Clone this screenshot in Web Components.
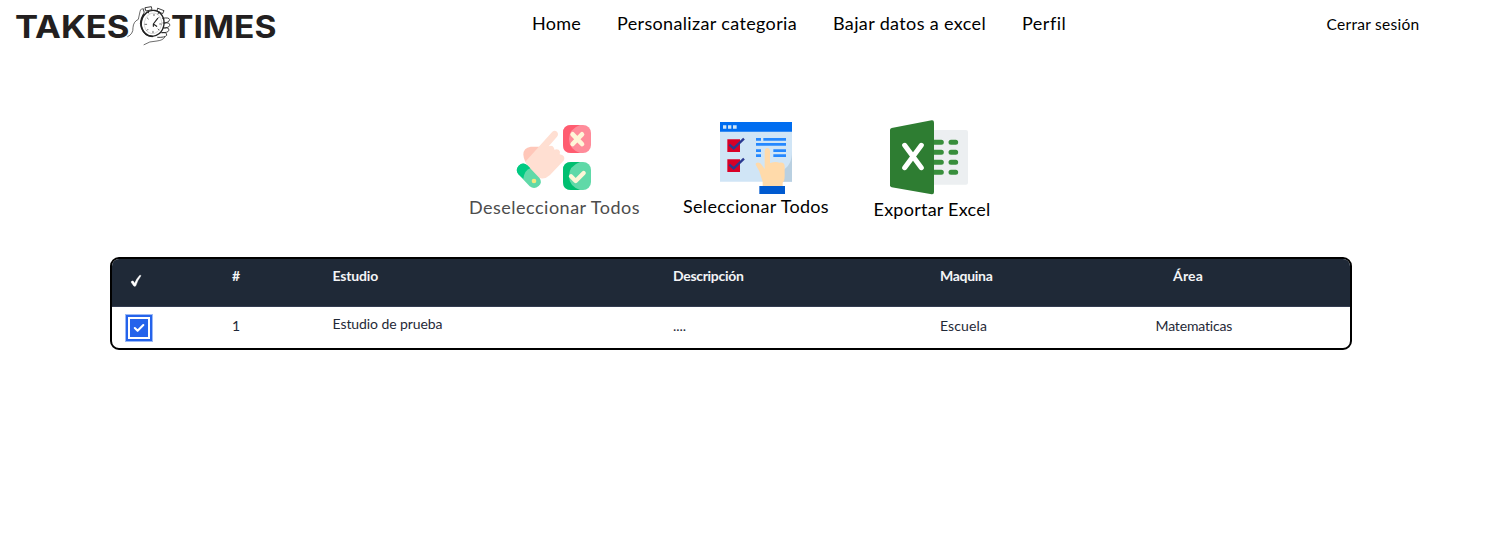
<!DOCTYPE html>
<html lang="es">
<head>
<meta charset="utf-8">
<title>Takes Times</title>
<style>
body{margin:0;background:#fff;font-family:Lato,"Open Sans",sans-serif;color:#000;height:552px;overflow:hidden}
</style>
</head>
<body>
<takes-app></takes-app>
<script>
const define=(name,html,after)=>customElements.define(name,class extends HTMLElement{
  connectedCallback(){
    if(this.shadowRoot)return;
    const t=document.createElement('template');
    t.innerHTML=html;
    this.attachShadow({mode:'open'}).append(t.content.cloneNode(true));
    if(after)after(this,this.shadowRoot);
  }
});

/* A single-line label whose tracking is adjusted to fill its declared width. */
define('fit-label',`<style>:host{display:block;white-space:nowrap;line-height:20px;height:20px}span{display:inline-block}</style><span><slot></slot></span>`,(el,root)=>{
  const w=+el.getAttribute('w'),s=root.querySelector('span'),n=el.textContent.length;
  el.style.width=w+'px';
  el.style.fontSize=el.getAttribute('size')+'px';
  s.style.letterSpacing=((w-s.getBoundingClientRect().width)/n)+'px';
});

define('takes-logo',`<style>:host{display:block;width:290px;height:50px}svg{display:block}text{font-family:Inter,sans-serif;font-weight:700;font-size:31px;fill:#231f20}</style>
<svg width="290" height="50" viewBox="0 0 290 50">
<text x="15" y="37.7" textLength="114.5" lengthAdjust="spacingAndGlyphs">TAKES</text>
<text x="171" y="37.7" textLength="105.5" lengthAdjust="spacingAndGlyphs">TIMES</text>
<g transform="translate(125) scale(.33333)" fill="none" stroke="#222" stroke-width="2.6" stroke-linecap="round" stroke-linejoin="round">
<ellipse cx="83" cy="70" rx="34" ry="39" stroke-width="4" transform="rotate(10 83 70)"/>
<path d="M55 45Q43 65 50 84Q59 108 82 109" stroke-width="5"/>
<ellipse cx="84" cy="70" rx="26" ry="31" stroke-width="1" transform="rotate(10 84 70)" opacity=".5"/>
<path d="M98 55L85 72V79M85 72l10 7" stroke-width="3.4"/>
<path d="M87 43v4M67 54l3 3M60 73h5M66 91l3-3M84 98v-4M102 90l-3-3M108 72h-4M102 52l-2 2" stroke-width="2"/>
<path d="M61 23l18-3 2 9-17 4zM99 25l18 7-4 9-16-7zM69 33l2 6M102 36l-3 6"/>
<path d="M57 27Q47 23 45 35L40 58Q25 65 24 83Q25 102 8 110" stroke-width="2"/>
<path d="M55 28Q61 36 54 47L46 69"/>
<path d="M113 55Q132 51 134 59Q134 67 119 69L114 69M119 69Q136 66 134 77Q131 84 114 84M119 84Q134 81 131 92Q128 99 110 98M111 98Q126 95 125 106Q120 113 98 112"/>
<path d="M57 134Q73 123 96 123Q114 121 119 112" stroke-width="2"/>
</g></svg>`);

define('top-bar',`<style>
:host{display:grid;grid-template-columns:532px 794.5px auto;height:50px}
nav{display:flex;gap:36px;padding-top:13px}
.out{padding-top:14px}
</style>
<takes-logo></takes-logo>
<nav><fit-label w="49" size="18">Home</fit-label><fit-label w="180" size="18">Personalizar categoria</fit-label><fit-label w="153" size="18">Bajar datos a excel</fit-label><fit-label w="44" size="18">Perfil</fit-label></nav>
<div class="out"><fit-label w="93" size="15.5">Cerrar sesión</fit-label></div>`);

define('icon-deselect',`<style>:host,svg{display:block}</style>
<svg width="100" height="85" viewBox="0 0 300 255">
<rect x="174" y="30" width="84" height="84" rx="24" fill="#ff8c9a"/>
<path d="M198 30h27Q192 42 192 72t33 42h-27q-24 0-24-24V54q0-24 24-24z" fill="#ff5c70"/>
<path d="M203 58l28 29M231 58l-28 29" stroke="#fff6d8" stroke-width="14" stroke-linecap="round"/>
<rect x="174" y="141" width="84" height="84" rx="24" fill="#60d9a8"/>
<path d="M198 141h27q-33 12-33 42t33 42h-27q-24 0-24-24v-36q0-24 24-24z" fill="#00bf70"/>
<path d="M198 184l14 14 24-24" fill="none" stroke="#fff6d8" stroke-width="13" stroke-linecap="round" stroke-linejoin="round"/>
<path d="M105 95H77Q55 98 55 119q2 20 14 31z" fill="#ffc7b9"/>
<path d="M61 140L142 50q7-6 14 0 6 7 0 15l-25 29q11-6 16 5l1 5q13-4 17 6l-1 8q18 3 13 18l-42 44q-20 19-43 4z" fill="#ffdfd2"/>
<path d="M41 152q13-13 26-1l37 39q9 13-3 23-13 12-27 1L40 178q-10-13 1-26z" fill="#60d9a8"/>
<path d="M41 152q13-13 26-1l9 9q-17 5-21 31l-15-13q-10-13 1-26z" fill="#00ca82"/>
<circle cx="87" cy="198" r="7" fill="#f5e77e"/>
</svg>`);

define('icon-select',`<style>:host,svg{display:block}</style>
<svg width="90" height="85" viewBox="0 0 270 255">
<path d="M30 21h216v179H30z" fill="#d0e5f6"/><path d="M246 108v92h-30V166q30-12 30-58z" fill="#b9d0e1"/>
<path d="M30 21h216v29H30z" fill="#006df0"/>
<path d="M39 31h10v10H39zM54 31h10v10H54zM69 31h11v10H69z" fill="#d0e5f6"/>
<path d="M52 73h38v38H52zM52 133h38v38H52z" fill="#d80027"/>
<path d="M58 89l13 11 31-29M58 149l13 11 31-29" fill="none" stroke="#2b3990" stroke-width="7"/>
<path d="M138 69h15v8h-15zM160 69h68v8h-68zM138 84h90v8h-90zM138 103h15v8h-15zM190 103h38v8h-38zM138 118h15v8h-15zM190 118h38v8h-38z" fill="#2488ff"/>
<path d="M164 108q1-9 8-9t8 9v36q18-5 28-1 16-3 16 12v28q0 15-6 20v11h-60v-14l-10-31-10-18q-3-7 3-8 10-2 15 8l8 11z" fill="#ffdaaa"/>
<path d="M148 213h77v24h-77z" fill="#005ad0"/>
</svg>`);

define('icon-excel',`<style>:host,svg{display:block}</style>
<svg width="100" height="90" viewBox="0 0 300 270">
<rect x="145" y="60" width="119" height="164" rx="6" fill="#eceff1"/>
<g stroke="#388e3c" stroke-width="15" stroke-linecap="round"><path d="M155 97h29M213 97h14M155 127h29M213 127h14M155 157h29M213 157h14M155 187h29M213 187h14"/></g>
<path d="M35 54L155 31q7-1 7 7v208q0 8-7 7L35 232q-5-1-5-6V60q0-5 5-6z" fill="#2e7d32"/>
<path d="M74 106l50 67M124 106l-50 67" stroke="#fff" stroke-width="15" stroke-linecap="round"/>
</svg>`);

define('action-item',`<style>:host{display:flex;flex-direction:column;align-items:center}</style><slot name="icon"></slot><slot></slot>`);

define('action-bar',`<style>
:host{display:flex;align-items:flex-start;padding:65px 0 0 469px;box-sizing:border-box;height:207px}
.one{color:#4d4d4d;margin-right:44px}
.two{margin-left:-1px;margin-right:46px}
.one fit-label{margin-top:-3px}.two fit-label{margin-top:-4px}.three fit-label{margin-top:-1px}
.one icon-deselect{margin-left:1px}
.two icon-select{margin-right:2px}
.three{margin-left:-1px;margin-top:-5px;width:116px}
.three icon-excel{margin-right:4px}
</style>
<action-item class="one"><icon-deselect slot="icon"></icon-deselect><fit-label w="171" size="18">Deseleccionar Todos</fit-label></action-item>
<action-item class="two"><icon-select slot="icon"></icon-select><fit-label w="146" size="18">Seleccionar Todos</fit-label></action-item>
<action-item class="three"><icon-excel slot="icon"></icon-excel><fit-label w="117" size="18">Exportar Excel</fit-label></action-item>`);

define('check-box',`<style>
:host{display:block;width:18px;height:18px;background:#2563eb;box-shadow:0 0 0 2px #fff,0 0 0 4px #2563eb,0 0 0 5px #9bb9f6}
svg{display:block}</style>
<svg width="18" height="18" viewBox="0 0 18 18"><path d="M4.8 9.1l2.8 2.7 5.7-5.7" fill="none" stroke="#fff" stroke-width="2.1" stroke-linecap="round" stroke-linejoin="round"/></svg>`);

define('study-table',`<style>
:host{display:block;box-sizing:border-box;width:1242px;height:93px;margin-left:110px;border:2px double #000;border-radius:9px;overflow:hidden}
.row{display:grid;grid-template-columns:120px 100.5px 340.5px 267px 233px 177px;height:42px;color:#1f2937}
.head{height:48px;background:#1f2937;color:#f3f4f6;font-weight:700;box-sizing:border-box;border-bottom:1px solid #333c50}
.head fit-label{margin-top:7px}
.row:not(.head) fit-label{margin-top:9px}
.row:not(.head) fit-label.study{margin-top:7px}
.row:not(.head) fit-label.area{margin-left:-17.5px}
.tick{display:block;margin:15px 0 0 18px}
check-box{margin:12px 0 0 18px}
</style>
<div class="row head">
<svg class="tick" width="13" height="13" viewBox="0 0 13 13"><path d="M1 7.9Q2 6.5 3.2 7.1L4.6 9.3Q7 4 9.8 1.3q1-.3 1.1.5Q7.5 6.3 5.8 11.8 4.8 12.8 3.8 12z" fill="#fff" stroke="#fff" stroke-width=".5"/></svg>
<fit-label w="8" size="14">#</fit-label><fit-label w="45.5" size="14">Estudio</fit-label><fit-label w="70.5" size="14">Descripción</fit-label><fit-label w="52.5" size="14">Maquina</fit-label><fit-label w="30" size="14">Área</fit-label>
</div>
<div class="row">
<check-box></check-box>
<fit-label w="8" size="14">1</fit-label><fit-label class="study" w="110" size="14">Estudio de prueba</fit-label><fit-label w="13" size="14">....</fit-label><fit-label w="47" size="14">Escuela</fit-label><fit-label class="area" w="77" size="14">Matematicas</fit-label>
</div>`);

define('takes-app',`<style>:host{display:block;width:1498px}</style><top-bar></top-bar><action-bar></action-bar><study-table></study-table>`);
</script>
</body>
</html>
